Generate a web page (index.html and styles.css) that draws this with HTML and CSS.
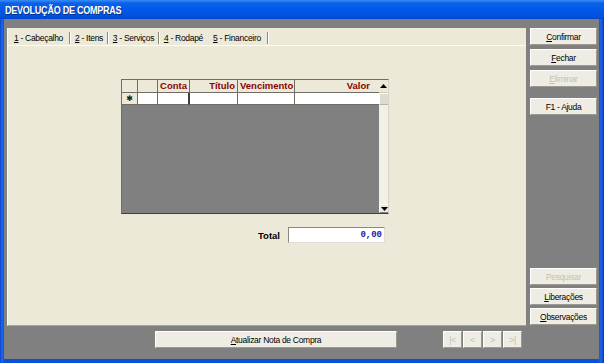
FILE: index.html
```html
<!DOCTYPE html>
<html>
<head>
<meta charset="utf-8">
<title>Devolução de Compras</title>
<link rel="stylesheet" href="styles.css">
</head>
<body>
<div class="window">
  <div class="titlebar"><span class="title">DEVOLUÇÃO DE COMPRAS</span></div>
  <div class="frame">
    <div class="client">
      <div class="main">
        <div class="panel">
          <div class="tabs">
            <div class="tab t1"><span><u>1</u> - Cabeçalho</span></div><div class="sep"></div>
            <div class="tab t2"><span><u>2</u> - Itens</span></div><div class="sep"></div>
            <div class="tab t3"><span><u>3</u> - Serviços</span></div><div class="sep"></div>
            <div class="tab t4"><span><u>4</u> - Rodapé</span></div>
            <div class="tab t5 active"><span><u>5</u> - Financeiro</span></div><div class="sep"></div>
          </div>
          <div class="page">
            <div class="grid">
              <div class="grid-data">
                <div class="grid-head">
                  <div class="cell w-ind"></div>
                  <div class="cell w-blank"></div>
                  <div class="cell w-conta">Conta</div>
                  <div class="cell w-titulo">Título</div>
                  <div class="cell w-venc">Vencimento</div>
                  <div class="cell w-valor">Valor</div>
                </div>
                <div class="grid-row">
                  <div class="cell w-ind ind">✱</div>
                  <div class="cell w-blank"></div>
                  <div class="cell w-conta edit"></div>
                  <div class="cell w-titulo"></div>
                  <div class="cell w-venc"></div>
                  <div class="cell w-valor"></div>
                </div>
                <div class="grid-empty"></div>
              </div>
              <div class="scrollbar">
                <div class="sb-btn sb-up"><svg width="7" height="4" viewBox="0 0 7 4"><polygon points="0,4 7,4 3.5,0" fill="#000"/></svg></div>
                <div class="sb-thumb"></div>
                <div class="sb-track"></div>
                <div class="sb-btn sb-down"><svg width="7" height="4" viewBox="0 0 7 4"><polygon points="0,0 7,0 3.5,4" fill="#000"/></svg></div>
              </div>
            </div>
            <div class="total-row">
              <span class="total-label">Total</span>
              <div class="total-box">0,00</div>
            </div>
          </div>
        </div>
        <div class="bottom-bar">
          <button class="btn btn-update"><u>A</u>tualizar Nota de Compra</button>
          <div class="nav">
            <button class="btn nav-btn" disabled>|&lt;</button>
            <button class="btn nav-btn" disabled>&lt;</button>
            <button class="btn nav-btn" disabled>&gt;</button>
            <button class="btn nav-btn" disabled>&gt;|</button>
          </div>
        </div>
      </div>
      <div class="side">
        <div class="side-group">
          <button class="btn side-btn"><u>C</u>onfirmar</button>
          <button class="btn side-btn"><u>F</u>echar</button>
          <button class="btn side-btn" disabled><u>E</u>liminar</button>
          <button class="btn side-btn help">F1 - Ajuda</button>
        </div>
        <div class="side-group bottom">
          <button class="btn side-btn" disabled>Pesquisar</button>
          <button class="btn side-btn"><u>L</u>iberações</button>
          <button class="btn side-btn"><u>O</u>bservações</button>
        </div>
      </div>
    </div>
  </div>
</div>
</body>
</html>
```

FILE: styles.css
```css
* { box-sizing: border-box; }
body {
  margin: 0;
  background: #ffffff;
  font-family: "Liberation Sans", Arial, sans-serif;
  font-size: 8.5px;
  letter-spacing: -0.3px;
  color: #000;
}
.window {
  width: 604px;
  height: 363px;
  display: flex;
  flex-direction: column;
  background: #0a4fd8;
}
.titlebar {
  height: 19px;
  flex: none;
  background: linear-gradient(#3d8cf6 0px, #0a62ea 3px, #0058e6 10px, #0052dc 16px, #0048cc 19px);
  padding-left: 5px;
  display: flex;
  align-items: center;
}
.title {
  display: inline-block;
  color: #fff;
  font-weight: bold;
  font-size: 11px;
  letter-spacing: -0.3px;
  text-shadow: 1px 1px 0 #0a2e8a;
  padding-top: 1px;
  white-space: nowrap;
  transform: scaleX(0.82);
  transform-origin: left center;
}
.frame {
  flex: 1;
  display: flex;
  padding: 0 5px 4px 4px;
  background: linear-gradient(90deg, #0b3fc6 0, #1f6bf0 2px, #0a50de 4px, #0a50de 598px, #1f63e8 601px, #0a3ab8 604px);
}
.client {
  flex: 1;
  background: #808080;
  display: flex;
}
.main {
  width: 522px;
  display: flex;
  flex-direction: column;
  padding-left: 3px;
}
.panel {
  margin-top: 9px;
  height: 298px;
  background: #ece9d8;
  border-left: 1px solid #fbfaf6;
  border-bottom: 1px solid #a8a698;
  display: flex;
  flex-direction: column;
}
.tabs {
  height: 18px;
  display: flex;
  align-items: stretch;
  border-bottom: 1px solid #fdfcf8;
}
.tab {
  display: flex;
  align-items: center;
  justify-content: center;
  padding-top: 2px;
  white-space: nowrap;
}
.t1 { width: 61px; }
.t2 { width: 36px; }
.t3 { width: 49px; }
.t4 { width: 47px; }
.t5 { width: 60px; }
.sep {
  width: 2px;
  margin: 4px 0 1px;
  border-left: 1px solid #8a887c;
  border-right: 1px solid #ffffff;
}
.page {
  flex: 1;
  padding: 33px 0 0 113px;
}
.grid {
  width: 268px;
  height: 135px;
  display: flex;
  border-top: 1px solid #6e6d66;
  border-left: 1px solid #6e6d66;
  border-bottom: 1px solid #404040;
  border-right: 1px solid #d8d5c8;
}
.grid-data {
  width: 257px;
  display: flex;
  flex-direction: column;
}
.grid-head, .grid-row {
  display: flex;
  flex: none;
}
.grid-head { height: 13px; }
.grid-row { height: 12px; }
.cell {
  flex: none;
  border-right: 1px solid #6e6d66;
  border-bottom: 1px solid #6e6d66;
  height: 100%;
  white-space: nowrap;
  overflow: hidden;
  line-height: 12px;
}
.grid-head .cell {
  background: #ece9d8;
  color: #8c0000;
  font-weight: bold;
  font-size: 9.5px;
  letter-spacing: 0;
  text-align: right;
  padding-right: 2px;
}
.grid-row .cell { background: #ffffff; }
.grid-row .cell.ind {
  background: #ece9d8;
  text-align: center;
  font-family: "DejaVu Sans", sans-serif;
  font-size: 8px;
  line-height: 11px;
  color: #202020;
}
.grid-row .cell.edit { border-right: 2px solid #404040; }
.w-ind { width: 16px; }
.w-blank { width: 20px; }
.w-conta { width: 32px; }
.w-titulo { width: 48px; }
.w-venc { width: 57px; }
.w-valor { width: 84px; }
.grid-head .w-venc { text-align: left; padding-left: 2px; }
.grid-head .w-valor { padding-right: 9px; border-right: none; }
.grid-row .w-valor { border-right: none; }
.grid-empty {
  flex: 1;
  background: #808080;
}
.scrollbar {
  width: 10px;
  display: flex;
  flex-direction: column;
  background: #f3f1e7;
}
.sb-btn {
  display: flex;
  align-items: center;
  justify-content: center;
  background: #ece9d8;
}
.sb-up { height: 13px; border-bottom: 1px solid #d0cdc0; }
.sb-thumb {
  height: 12px;
  background: #dedbcf;
  border-top: 1px solid #fff;
  border-left: 1px solid #fff;
  border-bottom: 1px solid #b8b5a8;
}
.sb-track { flex: 1; }
.sb-down {
  height: 9px;
  border-top: 1px solid #fff;
  border-left: 1px solid #fff;
  border-bottom: 1px solid #808080;
}
.total-row {
  display: flex;
  align-items: center;
  margin-top: 13px;
  margin-left: 137px;
}
.total-label {
  font-weight: bold;
  font-size: 9.5px;
  letter-spacing: 0;
  width: 30px;
}
.total-box {
  width: 97px;
  height: 16px;
  background: #fff;
  border-top: 1px solid #8a887c;
  border-left: 1px solid #8a887c;
  border-bottom: 1px solid #e0ded4;
  border-right: 1px solid #e0ded4;
  text-align: right;
  padding-right: 2px;
  font-family: "Liberation Mono", monospace;
  font-weight: bold;
  font-size: 9px;
  letter-spacing: 0;
  line-height: 14px;
  color: #1818a8;
}
.btn {
  font-family: inherit;
  font-size: 8.5px;
  letter-spacing: -0.3px;
  color: #000;
  background: #efede3;
  border: none;
  border-top: 1px solid #ffffff;
  border-left: 1px solid #ffffff;
  border-right: 1px solid #9c9a90;
  border-bottom: 1px solid #9c9a90;
  padding: 0;
  margin: 0;
  height: 17px;
  line-height: 14px;
  display: block;
  text-align: center;
}
.btn:disabled { color: #c4c1b4; }
.bottom-bar {
  flex: 1;
  display: flex;
  align-items: flex-start;
  padding-top: 5px;
  padding-left: 148px;
}
.btn-update { width: 242px; }
.nav {
  display: flex;
  margin-left: 46px;
  gap: 1px;
}
.nav-btn {
  width: 19px;
  font-size: 9px;
  letter-spacing: -0.5px;
  color: #c8c5b8;
}
.side {
  width: 67px;
  margin-left: 4px;
  display: flex;
  flex-direction: column;
  padding-top: 9px;
  padding-bottom: 34px;
}
.side-group {
  display: flex;
  flex-direction: column;
  gap: 4px;
}
.side-btn { width: 67px; }
.side-btn.help { margin-top: 7px; }
.side-group.bottom {
  margin-top: auto;
  gap: 3px;
}
```
